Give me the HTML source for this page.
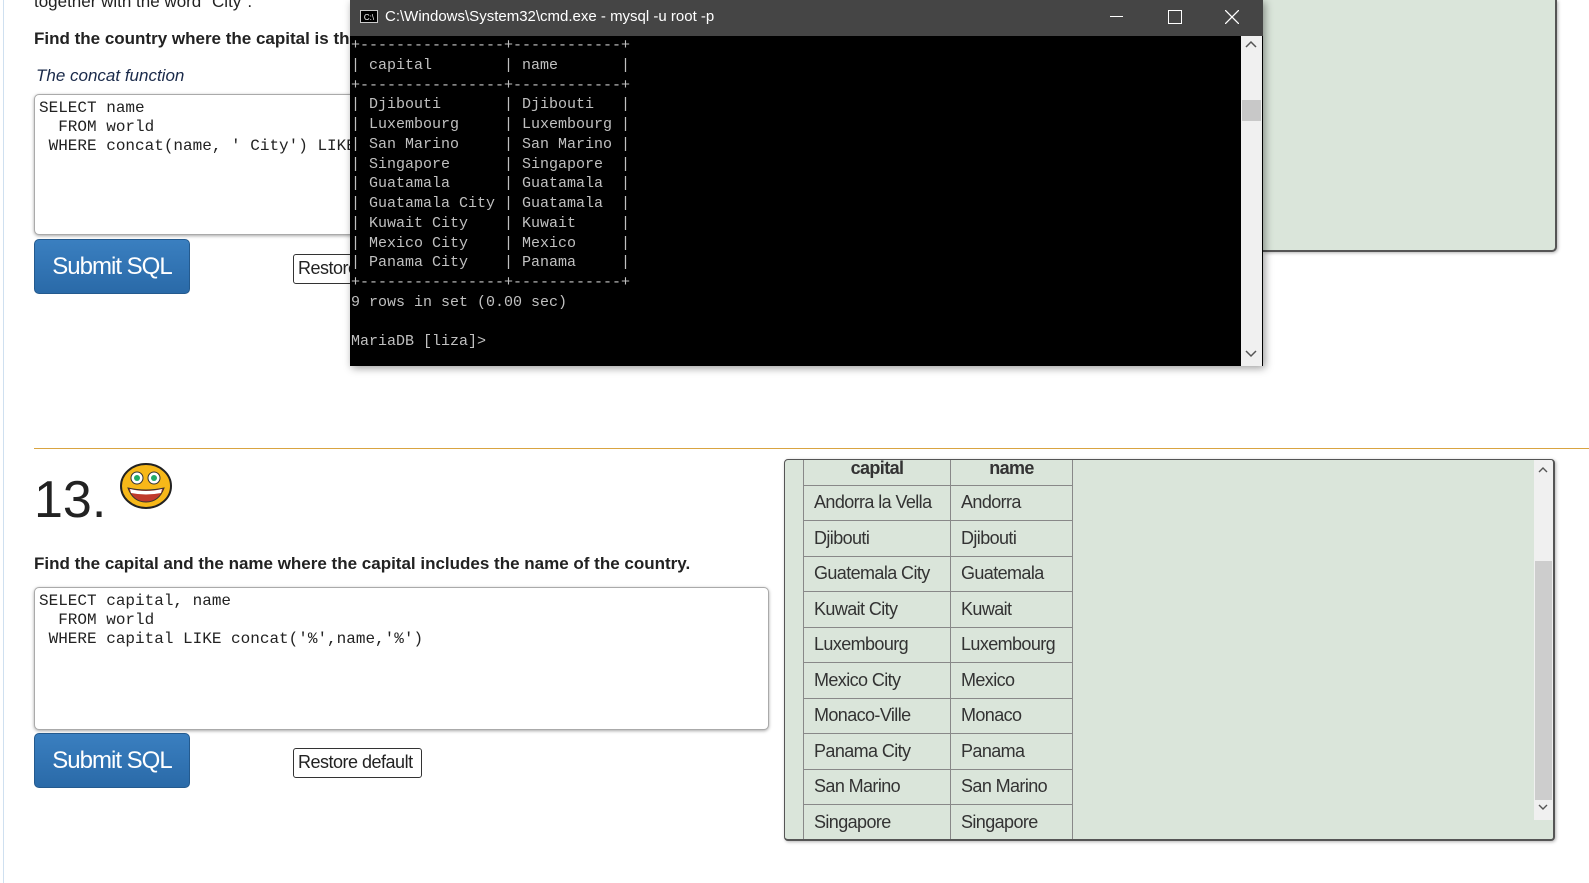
<!DOCTYPE html>
<html><head><style>
body{margin:0;width:1589px;height:883px;position:relative;overflow:hidden;background:#fff;font-family:"Liberation Sans",sans-serif;color:#222}
.abs{position:absolute}
.ta{position:absolute;border:1px solid #aaa;border-radius:5px;background:#fff;box-shadow:0 1px 3px rgba(0,0,0,.35);font-family:"Liberation Mono",monospace;font-size:16px;line-height:19px;padding:4px;box-sizing:border-box;white-space:pre;overflow:hidden}
.btn{position:absolute;background:linear-gradient(#3a7fc0,#2a6aa8);border:1px solid #245a8e;border-radius:5px;color:#fff;font-size:24px;text-align:center;box-sizing:border-box;letter-spacing:-1px}
.rst{position:absolute;border:1px solid #333;border-radius:3px;background:#fff;font-size:18px;box-sizing:border-box;padding:3px 4px;white-space:nowrap;overflow:hidden;letter-spacing:-0.5px}
.cmd{position:absolute;left:350px;top:0;width:913px;height:366px;background:#000;box-shadow:2px 2px 8px rgba(0,0,0,.4)}
.term{position:absolute;left:1px;top:36px;font-family:"Liberation Mono",monospace;font-size:15px;line-height:19.75px;color:#c0c0c0;white-space:pre}
table{border-collapse:collapse;font-size:18px;color:#333;letter-spacing:-0.6px}
td{border:1px solid #888;height:35.5px;padding:0 10px;box-sizing:border-box;white-space:nowrap;overflow:hidden}
</style></head><body>
<div class="abs" style="left:3px;top:0;width:1px;height:883px;background:#cfe0f0"></div>
<div class="abs" style="left:34px;top:-8px;font-size:17px">together with the word "City".</div>
<div class="abs" style="left:34px;top:29px;font-size:17px;font-weight:bold">Find the country where the capital is the country plus "City".</div>
<div class="abs" style="left:36px;top:66px;font-size:17px;font-style:italic;color:#1a2a4a">The concat function</div>
<div class="ta" style="left:34px;top:94px;width:500px;height:141px">SELECT name
  FROM world
 WHERE concat(name, ' City') LIKE capital</div>
<div class="btn" style="left:34px;top:239px;width:156px;height:55px;line-height:54px">Submit SQL</div>
<div class="rst" style="left:293px;top:254px;width:130px;height:30px">Restore default</div>

<div class="abs" style="left:1263px;top:0;width:292px;height:250px;background:#dae5da;border-right:2px solid #555;border-bottom:2px solid #555;border-radius:0 0 5px 0;box-shadow:1px 1px 3px rgba(0,0,0,.3)"></div>

<div class="cmd">
 <div class="abs" style="left:0;top:0;width:913px;height:36px;background:#454545"></div>
 <div class="abs" style="left:10px;top:10px;width:18px;height:13px;border:1px solid #ccc;background:#000;color:#fff;font-size:8px;line-height:13px;text-align:center;box-sizing:border-box">C:\</div>
 <div class="abs" style="left:35px;top:8px;color:#fff;font-size:15px">C:\Windows\System32\cmd.exe - mysql  -u root -p</div>
 <div class="abs" style="left:760px;top:16px;width:13px;height:1px;background:#fff"></div>
 <div class="abs" style="left:818px;top:10px;width:12px;height:12px;border:1px solid #fff"></div>
 <svg class="abs" style="left:875px;top:10px" width="14" height="14"><path d="M0 0L14 14M14 0L0 14" stroke="#fff" stroke-width="1.3"/></svg>
 <div class="abs" style="left:891px;top:36px;width:21px;height:330px;background:#f0f0f0"></div>
 <div class="abs" style="left:892px;top:100px;width:19px;height:21px;background:#c8c8c8"></div>
 <svg class="abs" style="left:895px;top:40px" width="12" height="8"><path d="M1 7L6 2L11 7" stroke="#555" stroke-width="1.5" fill="none"/></svg>
 <svg class="abs" style="left:895px;top:350px" width="12" height="8"><path d="M1 1L6 6L11 1" stroke="#555" stroke-width="1.5" fill="none"/></svg>
 <div class="term">+----------------+------------+
| capital        | name       |
+----------------+------------+
| Djibouti       | Djibouti   |
| Luxembourg     | Luxembourg |
| San Marino     | San Marino |
| Singapore      | Singapore  |
| Guatamala      | Guatamala  |
| Guatamala City | Guatamala  |
| Kuwait City    | Kuwait     |
| Mexico City    | Mexico     |
| Panama City    | Panama     |
+----------------+------------+
9 rows in set (0.00 sec)

MariaDB [liza]&gt;</div>
</div>

<div class="abs" style="left:34px;top:448px;width:1555px;height:1px;background:#d9a441"></div>
<div class="abs" style="left:34px;top:470px;font-size:52px;color:#222">13.</div>
<svg class="abs" style="left:119px;top:462px" width="54" height="47"><ellipse cx="27" cy="24" rx="25" ry="22" fill="#f7b819" stroke="#222" stroke-width="2"/><circle cx="18" cy="16" r="6" fill="#fff" stroke="#333"/><circle cx="35" cy="16" r="6" fill="#fff" stroke="#333"/><circle cx="18" cy="16" r="3" fill="#2a6"/><circle cx="35" cy="16" r="3" fill="#2a6"/><path d="M9 26Q27 30 45 26Q40 40 27 40Q14 40 9 26Z" fill="#c0392b" stroke="#333"/><path d="M11 27Q27 31 43 27L42 31Q27 34 12 31Z" fill="#fff"/></svg>
<div class="abs" style="left:34px;top:554px;font-size:17px;font-weight:bold">Find the capital and the name where the capital includes the name of the country.</div>
<div class="ta" style="left:34px;top:587px;width:735px;height:143px">SELECT capital, name
  FROM world
 WHERE capital LIKE concat('%',name,'%')</div>
<div class="btn" style="left:34px;top:733px;width:156px;height:55px;line-height:54px">Submit SQL</div>
<div class="rst" style="left:293px;top:748px;width:129px;height:30px">Restore default</div>

<div class="abs" style="left:784px;top:459px;width:771px;height:382px;background:#dae5da;border:1px solid #555;border-width:1px 2px 2px 1px;border-radius:4px;box-sizing:border-box;overflow:hidden;box-shadow:1px 1px 3px rgba(0,0,0,.3)">
 <table class="abs" style="left:18px;top:-11px;table-layout:fixed;width:269px">
  <tr><td style="width:147px;height:36px;text-align:center;font-weight:bold;vertical-align:bottom;padding-bottom:6px;border-top:none">capital</td><td style="width:122px;text-align:center;font-weight:bold;vertical-align:bottom;padding-bottom:6px;border-top:none">name</td></tr>
  <tr><td>Andorra la Vella</td><td>Andorra</td></tr>
  <tr><td>Djibouti</td><td>Djibouti</td></tr>
  <tr><td>Guatemala City</td><td>Guatemala</td></tr>
  <tr><td>Kuwait City</td><td>Kuwait</td></tr>
  <tr><td>Luxembourg</td><td>Luxembourg</td></tr>
  <tr><td>Mexico City</td><td>Mexico</td></tr>
  <tr><td>Monaco-Ville</td><td>Monaco</td></tr>
  <tr><td>Panama City</td><td>Panama</td></tr>
  <tr><td>San Marino</td><td>San Marino</td></tr>
  <tr><td>Singapore</td><td>Singapore</td></tr>
 </table>
 <div class="abs" style="left:749px;top:0;width:19px;height:360px;background:#f0f0f0"></div>
 <div class="abs" style="left:750px;top:101px;width:17px;height:239px;background:#cdcdcd"></div>
 <svg class="abs" style="left:753px;top:6px" width="10" height="7"><path d="M1 6L5 2L9 6" stroke="#555" stroke-width="1.4" fill="none"/></svg>
 <svg class="abs" style="left:753px;top:344px" width="10" height="7"><path d="M1 1L5 5L9 1" stroke="#555" stroke-width="1.4" fill="none"/></svg>
</div>
</body></html>
